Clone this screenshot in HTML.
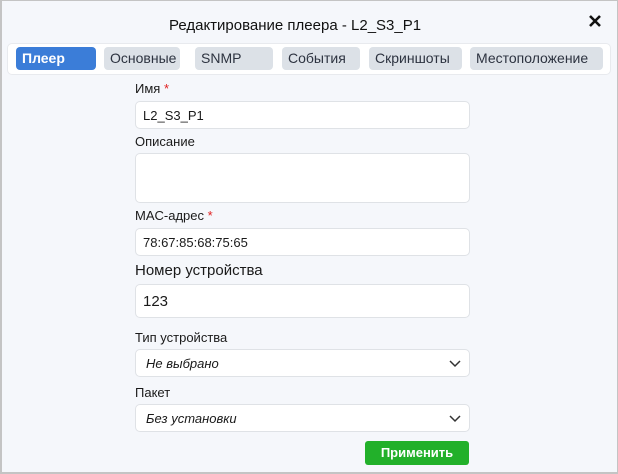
<!DOCTYPE html>
<html><head><meta charset="utf-8"><style>
*{box-sizing:border-box;margin:0;padding:0}
body{width:618px;height:474px;overflow:hidden;background:#f5f7fb;font-family:"Liberation Sans",sans-serif;color:#1a1a1a}
.frame{position:absolute;left:0;top:0;width:618px;height:474px;border:1px solid #c4c4c4;border-width:1px 1px 2px 2px;background:#f5f7fb}
.title{position:absolute;top:17px;left:169px;font-size:15px;color:#111}
.close{position:absolute;left:587px;top:13px}
.bar{position:absolute;left:7px;top:43px;width:604px;height:32px;background:#fff;border:1px solid #e8eaee;border-radius:5px}
.tab{position:absolute;top:47px;height:23px;background:#dce1e7;border-radius:4px;font-size:14px;color:#2d3340;line-height:23px;padding-left:6px}
.tab.a{background:#3b7dd8;color:#fff;font-weight:bold}
.lbl{position:absolute;left:135px;font-size:13px;color:#1a1a1a}
.lbl b{color:#e02020;font-weight:normal}
.in{position:absolute;left:135px;width:335px;background:#fff;border:1px solid #dfe2e6;border-radius:5px;font-size:13px;padding-left:7px;display:flex;align-items:center}
.in i{font-size:13px}
.chev{position:absolute;right:8px;top:50%;margin-top:-5px}
.btn{position:absolute;left:365px;top:441px;width:104px;height:24px;background:#22b02a;border-radius:3px;color:#fff;font-weight:bold;font-size:13px;text-align:center;line-height:24px}
</style></head><body><div class="frame"></div>
<div class="title">Редактирование плеера - L2_S3_P1</div>
<svg class="close" width="16" height="16" viewBox="0 0 16 16"><path d="M3 3L13 13M13 3L3 13" stroke="#111" stroke-width="2.6"/></svg>
<div class="bar"></div>
<div class="tab a" style="left:16px;width:80px">Плеер</div>
<div class="tab" style="left:104px;width:76px">Основные</div>
<div class="tab" style="left:195px;width:78px">SNMP</div>
<div class="tab" style="left:282px;width:78px">События</div>
<div class="tab" style="left:369px;width:93px">Скриншоты</div>
<div class="tab" style="left:470px;width:133px">Местоположение</div>
<div class="lbl" style="top:81px">Имя <b>*</b></div>
<div class="in" style="top:101px;height:28px">L2_S3_P1</div>
<div class="lbl" style="top:134px">Описание</div>
<div class="in" style="top:153px;height:50px"></div>
<div class="lbl" style="top:208px">MAC-адрес <b>*</b></div>
<div class="in" style="top:228px;height:28px">78:67:85:68:75:65</div>
<div class="lbl" style="top:262px;font-size:15px">Номер устройства</div>
<div class="in" style="top:284px;height:34px;font-size:15px">123</div>
<div class="lbl" style="top:330px">Тип устройства</div>
<div class="in" style="top:349px;height:28px;padding-left:10px"><i>Не выбрано</i><svg class="chev" width="12" height="10" viewBox="0 0 12 10"><path d="M1 3L6 8L11 3" stroke="#333" stroke-width="1.5" fill="none"/></svg></div>
<div class="lbl" style="top:385px">Пакет</div>
<div class="in" style="top:404px;height:28px;padding-left:10px"><i>Без установки</i><svg class="chev" width="12" height="10" viewBox="0 0 12 10"><path d="M1 3L6 8L11 3" stroke="#333" stroke-width="1.5" fill="none"/></svg></div>
<div class="btn">Применить</div>
</body></html>
